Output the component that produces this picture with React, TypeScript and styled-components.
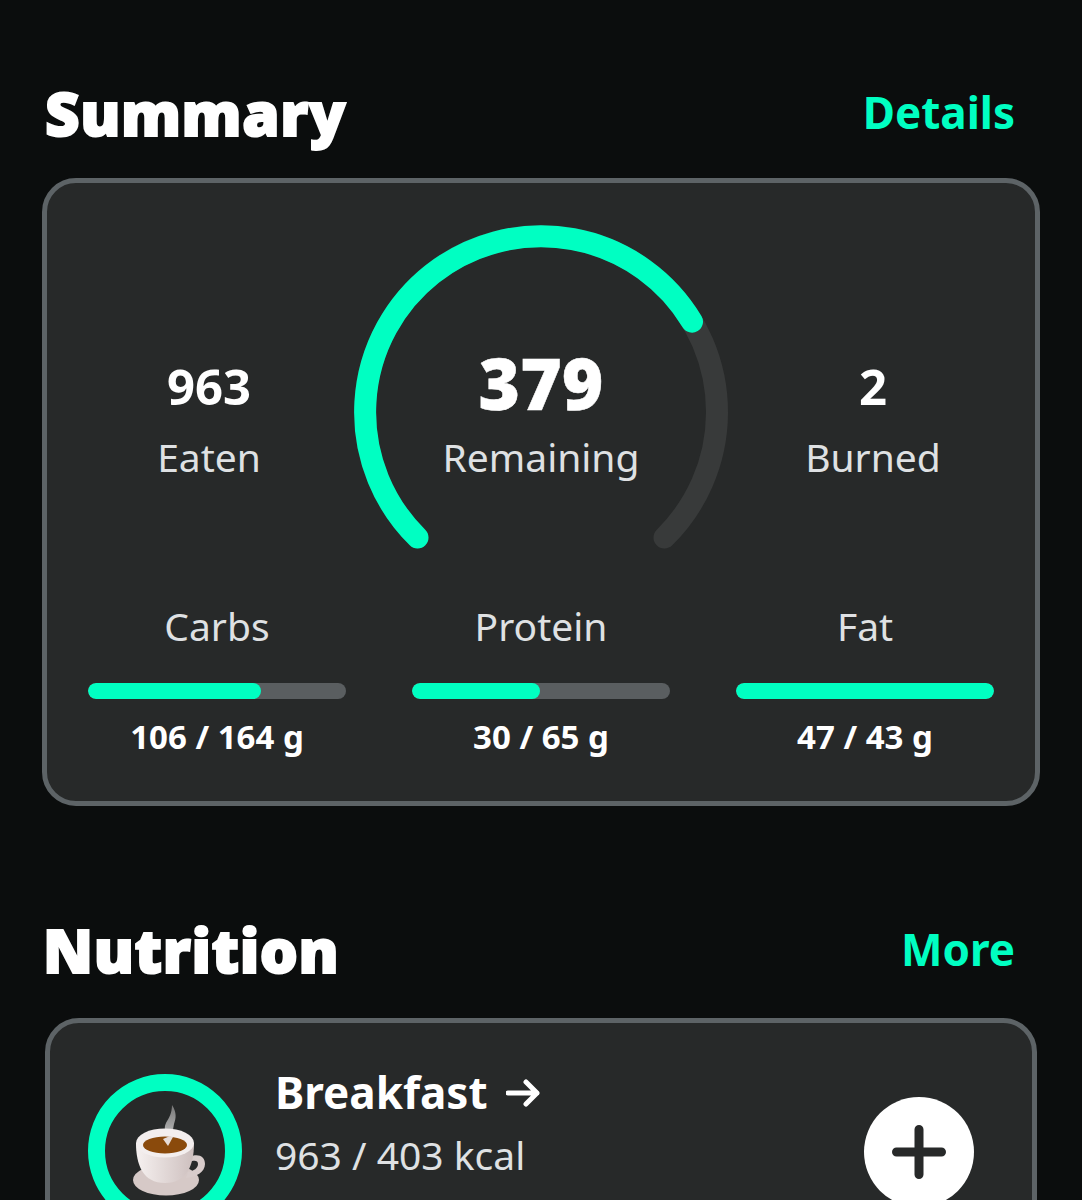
import React from 'react'
import styled, {createGlobalStyle} from 'styled-components'

const ACCENT = '#00ffc2'

const GlobalStyle = createGlobalStyle`
    html, body {
        margin: 0;
        padding: 0;
        background: #0b0d0d;
    }
`

const Page = styled.div`
    width: 1082px;
    height: 1200px;
    overflow: hidden;
    background: #0b0d0d;
    font-family: "Noto Sans", "Open Sans", sans-serif;
    color: #fff;
`

const Section = styled.section<{$top: number; $inset: number}>`
    padding: ${props => props.$top}px ${props => props.$inset}px 0;
`

const SectionHeader = styled.div<{$gap: number; $left: number; $right: number}>`
    display: flex;
    align-items: center;
    justify-content: space-between;
    height: 66px;
    margin: 0 ${props => props.$right}px ${props => props.$gap}px ${props => props.$left}px;
`

const Title = styled.h2`
    margin: 0;
    font-size: 60px;
    line-height: 66px;
    font-weight: 900;
    letter-spacing: 0.6px;
    -webkit-text-stroke: 2px #fff;
`

const HeaderLink = styled.a`
    margin-bottom: 2px;
    font-size: 44px;
    line-height: 66px;
    font-weight: 700;
    color: ${ACCENT};
`

const Card = styled.div`
    box-sizing: border-box;
    background: #272929;
    border: 5px solid #5d6366;
    border-radius: 34px;
`

const SummaryCard = styled(Card)`
    height: 628px;
    padding: 42px 41px 0;
`

const TopRow = styled.div`
    display: grid;
    grid-template-columns: 1fr 374px 1fr;
    column-gap: 24px;
    align-items: center;
    height: 330px;
`

const Stat = styled.div`
    display: flex;
    flex-direction: column;
    align-items: center;
    padding-top: 57px;
`

const StatValue = styled.div`
    font-size: 49px;
    line-height: 64px;
    font-weight: 700;
`

const StatLabel = styled.div<{$gap: number}>`
    margin-top: ${props => props.$gap}px;
    font-size: 39px;
    line-height: 54px;
    color: #dfe1e3;
`

const GaugeWrap = styled.div`
    position: relative;
    height: 330px;
`

const GaugeSvg = styled.svg`
    display: block;
    overflow: visible;
`

const GaugeCenter = styled.div`
    position: absolute;
    left: 0;
    right: 0;
    top: 118px;
    display: flex;
    flex-direction: column;
    align-items: center;
`

const GaugeValue = styled.div`
    font-size: 71px;
    line-height: 80px;
    font-weight: 900;
    -webkit-text-stroke: 0.5px #fff;
`

const Macros = styled.div`
    display: grid;
    grid-template-columns: repeat(3, 258px);
    column-gap: 66px;
    margin-top: 44px;
`

const Macro = styled.div`
    display: flex;
    flex-direction: column;
    align-items: center;
`

const MacroLabel = styled.div`
    font-size: 39px;
    line-height: 54px;
    color: #dfe1e3;
`

const BarTrack = styled.div`
    width: 100%;
    height: 16px;
    margin-top: 30px;
    border-radius: 8px;
    background: #5a5e60;
    overflow: hidden;
`

const BarFill = styled.div`
    height: 100%;
    border-radius: 8px;
    background: ${ACCENT};
`

const MacroAmount = styled.div`
    margin-top: 16px;
    font-size: 33px;
    line-height: 44px;
    font-weight: 700;
`

const MealCard = styled(Card)`
    height: 260px;
    padding: 51px 58px 0 38px;
    display: flex;
    align-items: flex-start;
`

const MealRing = styled.div`
    box-sizing: border-box;
    flex: none;
    width: 154px;
    height: 154px;
    border: 17px solid ${ACCENT};
    border-radius: 50%;
    display: flex;
    align-items: center;
    justify-content: center;
`

const CupIcon = styled.svg`
    flex: none;
    margin-left: 6px;
`

const MealInfo = styled.div`
    flex: 1;
    margin-left: 33px;
    margin-top: -13px;
`

const MealName = styled.div`
    display: flex;
    align-items: center;
    gap: 18px;
    font-size: 44px;
    line-height: 63px;
    font-weight: 700;
`

const MealLine = styled.div`
    font-size: 39px;
    line-height: 62px;
    color: #dfe1e3;
    white-space: nowrap;
`

const AddButton = styled.button`
    flex: none;
    width: 110px;
    height: 110px;
    margin-top: 23px;
    padding: 0;
    border: 0;
    border-radius: 50%;
    background: #fff;
    display: flex;
    align-items: center;
    justify-content: center;
`

const macros = [
    {name: 'Carbs', amount: '106 / 164 g', percent: 67},
    {name: 'Protein', amount: '30 / 65 g', percent: 49.5},
    {name: 'Fat', amount: '47 / 43 g', percent: 100},
]

const Gauge = () => (
    <GaugeSvg width="374" height="330" viewBox="0 0 374 330">
        <path
            d="M 63.500 312.500 A 176 176 0 1 1 310.500 312.500"
            fill="none"
            stroke="#383a3a"
            strokeWidth="22"
            strokeLinecap="round"
        />
        <path
            d="M 63.500 312.500 A 176 176 0 1 1 338 96.600"
            fill="none"
            stroke={ACCENT}
            strokeWidth="22"
            strokeLinecap="round"
        />
    </GaugeSvg>
)

const CoffeeCup = () => (
    <CupIcon width="76" height="92" viewBox="0 0 76 92">
        <defs>
            <linearGradient id="cup" x1="0" y1="0" x2="1" y2="0">
                <stop offset="0" stopColor="#f6f1f0" />
                <stop offset="1" stopColor="#cdbfbe" />
            </linearGradient>
            <linearGradient id="steam" x1="0" y1="0" x2="0" y2="1">
                <stop offset="0" stopColor="#777" />
                <stop offset="1" stopColor="#bdbdbd" />
            </linearGradient>
        </defs>
        <path d="M42 0c5 8 4 13 2 19-1 4-1 9-3 14-5-5-8-9-5-15 3-5 6-10 6-18z" fill="url(#steam)" />
        <ellipse cx="36" cy="75" rx="33" ry="15.500" fill="#d6c9c7" />
        <path d="M59 52c9-4 16-1 16 7 0 8-9 13-19 14l2-6c6-1 10-4 10-8 0-4-4-4-9-2z" fill="#d8cccb" />
        <path d="M6 38c0 22 7 40 29 40s29-18 29-40z" fill="url(#cup)" />
        <ellipse cx="35" cy="38" rx="29" ry="14.500" fill="#f3eeee" />
        <ellipse cx="35" cy="40" rx="22" ry="8.500" fill="#8a4a0c" />
        <path d="M33 34l7-3 3 1-5 9z" fill="#e6dcd8" />
    </CupIcon>
)

const ArrowIcon = () => (
    <svg width="34" height="28" viewBox="0 0 34 28">
        <path
            d="M2 14h29M20 3l11 11-11 11"
            fill="none"
            stroke="#fff"
            strokeWidth="5"
            strokeLinecap="round"
            strokeLinejoin="round"
        />
    </svg>
)

export default function App() {
    return (
        <Page>
            <GlobalStyle />
            <Section $top={80} $inset={42}>
                <SectionHeader $gap={32} $left={3} $right={25}>
                    <Title>Summary</Title>
                    <HeaderLink>Details</HeaderLink>
                </SectionHeader>
                <SummaryCard>
                    <TopRow>
                        <Stat>
                            <StatValue>963</StatValue>
                            <StatLabel $gap={12}>Eaten</StatLabel>
                        </Stat>
                        <GaugeWrap>
                            <Gauge />
                            <GaugeCenter>
                                <GaugeValue>379</GaugeValue>
                                <StatLabel $gap={7}>Remaining</StatLabel>
                            </GaugeCenter>
                        </GaugeWrap>
                        <Stat>
                            <StatValue>2</StatValue>
                            <StatLabel $gap={12}>Burned</StatLabel>
                        </Stat>
                    </TopRow>
                    <Macros>
                        {macros.map(macro => (
                            <Macro key={macro.name}>
                                <MacroLabel>{macro.name}</MacroLabel>
                                <BarTrack>
                                    <BarFill style={{width: `${macro.percent}%`}} />
                                </BarTrack>
                                <MacroAmount>{macro.amount}</MacroAmount>
                            </Macro>
                        ))}
                    </Macros>
                </SummaryCard>
            </Section>
            <Section $top={111} $inset={45}>
                <SectionHeader $gap={35} $left={-2} $right={22}>
                    <Title>Nutrition</Title>
                    <HeaderLink>More</HeaderLink>
                </SectionHeader>
                <MealCard>
                    <MealRing>
                        <CoffeeCup />
                    </MealRing>
                    <MealInfo>
                        <MealName>Breakfast <ArrowIcon /></MealName>
                        <MealLine>963 / 403 kcal</MealLine>
                        <MealLine>Cola, egg bun, rye loaves</MealLine>
                    </MealInfo>
                    <AddButton aria-label="Add">
                        <svg width="54" height="54" viewBox="0 0 54 54">
                            <path d="M27 4.500v45M4.500 27h45" stroke="#272929" strokeWidth="9" strokeLinecap="round" />
                        </svg>
                    </AddButton>
                </MealCard>
            </Section>
        </Page>
    )
}
